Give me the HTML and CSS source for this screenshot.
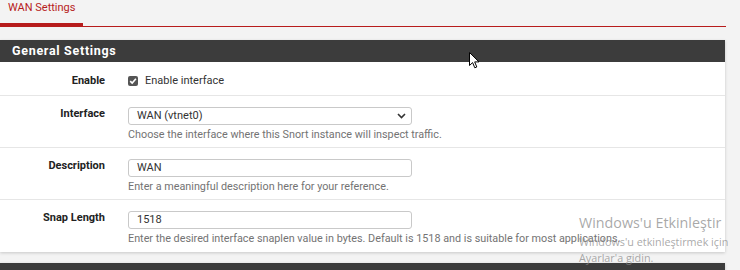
FILE: index.html
```html
<!DOCTYPE html>
<html>
<head>
<meta charset="utf-8">
<link rel="stylesheet" href="styles.css">
</head>
<body>
<div class="page">
  <div class="tabs">
    <div class="tab active">WAN Settings</div>
  </div>
  <div class="panel">
    <div class="panel-heading">General Settings</div>
    <div class="row row-check">
      <div class="label">Enable</div>
      <div class="control">
        <label class="check"><span class="box"><svg width="8" height="8" viewBox="0 0 8 8"><path d="M1.2 4.2 L3.2 6.1 L6.9 1.8" fill="none" stroke="#fff" stroke-width="1.6"/></svg></span>Enable interface</label>
      </div>
    </div>
    <div class="row">
      <div class="label">Interface</div>
      <div class="control">
        <div class="field select">WAN (vtnet0)<svg class="chev" width="9" height="6" viewBox="0 0 9 6"><path d="M1 1 L4.5 4.5 L8 1" fill="none" stroke="#333" stroke-width="1.6"/></svg></div>
        <div class="help">Choose the interface where this Snort instance will inspect traffic.</div>
      </div>
    </div>
    <div class="row">
      <div class="label">Description</div>
      <div class="control">
        <div class="field">WAN</div>
        <div class="help">Enter a meaningful description here for your reference.</div>
      </div>
    </div>
    <div class="row last">
      <div class="label">Snap Length</div>
      <div class="control">
        <div class="field">1518</div>
        <div class="help">Enter the desired interface snaplen value in bytes. Default is 1518 and is suitable for most applications.</div>
      </div>
    </div>
  </div>
  <div class="panel next">
    <div class="panel-heading">&nbsp;</div>
  </div>
</div>
<div class="watermark">
  <div class="wm-title">Windows'u Etkinleştir</div>
  <div class="wm-sub">Windows'u etkinleştirmek için<br>Ayarlar'a gidin.</div>
</div>
<svg class="cursor" width="12" height="18" viewBox="0 0 12 18"><path d="M0.5 0.5 L0.5 13.5 L3.6 10.6 L5.8 15.8 L7.8 15 L5.7 9.9 L10 9.9 Z" fill="#fff" stroke="#000" stroke-width="1"/></svg>
</body>
</html>
```
FILE: styles.css
```css
html, body {
  margin: 0;
  padding: 0;
  background: #f3f3f3;
  font-family: Roboto, "Liberation Sans", sans-serif;
  color: #333;
  overflow: hidden;
}
.page {
  width: 726px;
}
.tabs {
  display: flex;
  height: 26px;
  border-bottom: 1px solid #b71c1c;
}
.tab {
  font-size: 11px;
  line-height: 16px;
  padding: 0 8px;
  color: #b71c1c;
  white-space: nowrap;
  border-bottom: 3px solid #b71c1c;
  height: 23px;
}
.panel {
  margin-top: 13px;
  width: 725px;
  background: #fff;
  box-shadow: 0 1px 3px rgba(0,0,0,0.18);
}
.panel.next {
  margin-top: 11px;
}
.panel-heading {
  background: #3c3c3c;
  color: #fff;
  font-weight: bold;
  font-size: 12.5px;
  letter-spacing: 0.7px;
  height: 22px;
  line-height: 22px;
  padding-left: 12px;
}
.row {
  display: grid;
  grid-template-columns: 105px 1fr;
  column-gap: 23px;
  padding: 11px 0 5px;
  border-bottom: 1px solid #e6e6e6;
}
.row.last {
  border-bottom: none;
  padding-bottom: 6px;
}
.row-check {
  padding: 12px 0 7px;
}
.label {
  text-align: right;
  font-weight: bold;
  font-size: 11px;
  line-height: 14px;
  color: #222;
}
.check {
  display: flex;
  align-items: center;
  font-size: 11px;
  line-height: 14px;
  color: #333;
}
.box {
  width: 10px;
  height: 10px;
  border-radius: 2px;
  background: #555;
  display: flex;
  align-items: center;
  justify-content: center;
  margin-right: 7px;
}
.field {
  width: 284px;
  height: 18px;
  box-sizing: border-box;
  border: 1px solid #c9c9c9;
  border-radius: 3px;
  background: #fff;
  font-size: 11px;
  line-height: 16px;
  padding-left: 8px;
  color: #333;
  display: flex;
  align-items: center;
}
.select .chev {
  margin-left: auto;
  margin-right: 5px;
}
.help {
  margin-top: 3px;
  font-size: 10.8px;
  line-height: 14px;
  color: #737373;
  white-space: nowrap;
}
.watermark {
  position: absolute;
  left: 579px;
  top: 213px;
  color: rgba(140,140,140,0.75);
  font-family: "Open Sans", "Noto Sans", sans-serif;
}
.wm-title {
  font-size: 14.3px;
  line-height: 20px;
}
.wm-sub {
  font-size: 10.8px;
  line-height: 16px;
  margin-top: 1px;
}
.cursor {
  position: absolute;
  left: 469px;
  top: 52px;
}
```
